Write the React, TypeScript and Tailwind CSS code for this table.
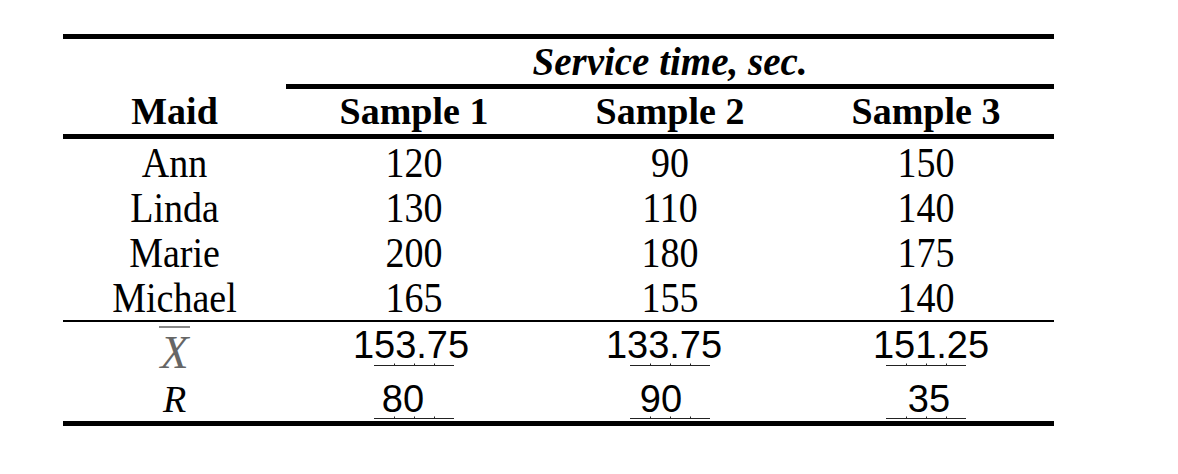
const serif = "font-['Liberation_Serif','Times_New_Roman',serif]";
const sans = "font-['Liberation_Sans',Arial,sans-serif]";

const maids = [
  { name: "Ann", s: [120, 90, 150] },
  { name: "Linda", s: [130, 110, 140] },
  { name: "Marie", s: [200, 180, 175] },
  { name: "Michael", s: [165, 155, 140] },
];

// blank line under the summary numbers, with little ticks like in the doc
function Blank({ bottom }: { bottom: string }) {
  return (
    <svg
      width="80"
      height="4"
      viewBox="0 0 80 4"
      className={`absolute left-1/2 -translate-x-1/2 ${bottom}`}
    >
      <line x1="0" y1="3.5" x2="80" y2="3.5" stroke="#222" strokeWidth="1" />
      <line x1="20.5" y1="1.5" x2="20.5" y2="4" stroke="#222" strokeWidth="1" />
      <line x1="40.5" y1="1.5" x2="40.5" y2="4" stroke="#222" strokeWidth="1" />
      <line x1="60.5" y1="1.5" x2="60.5" y2="4" stroke="#222" strokeWidth="1" />
    </svg>
  );
}

const means = [
  { v: "153.75", shift: "pr-[6px]" },
  { v: "133.75", shift: "pr-[12px]" },
  { v: "151.25", shift: "pl-[10px]" },
];
const ranges = [
  { v: "80", shift: "pr-[22px]" },
  { v: "90", shift: "pr-[18px]" },
  { v: "35", shift: "pl-[6px]" },
];

export default function App() {
  return (
    <div className="w-[1178px] h-[474px] bg-white pl-[63px] pt-[34px] text-black">
      <div className="w-[991px]">
        <div className="h-[5px] bg-black" />

        {/* spanner */}
        <div className="grid grid-cols-[223px_768px]">
          <div />
          <div>
            <div
              className={`${serif} h-[45px] flex items-end justify-center pb-[3px] text-[39px] leading-none font-bold italic`}
            >
              Service time, sec.
            </div>
            <div className="h-[5px] bg-black" />
          </div>
        </div>

        {/* header */}
        <div
          className={`${serif} grid grid-cols-[223px_256px_256px_256px] h-[45px] items-end pb-[4px] text-[38px] leading-none font-bold`}
        >
          <div className="text-center">Maid</div>
          <div className="text-center">Sample 1</div>
          <div className="text-center">Sample 2</div>
          <div className="text-center">Sample 3</div>
        </div>
        <div className="h-[5px] bg-black" />

        {/* data */}
        <div className={`${serif} pb-px text-[38px] leading-none`}>
          {maids.map((m) => (
            <div
              key={m.name}
              className="grid grid-cols-[223px_256px_256px_256px] h-[45px] items-center pt-[3px]"
            >
              <div className="text-center scale-y-110">{m.name}</div>
              {m.s.map((v, i) => (
                <div key={i} className="text-center scale-y-110">
                  {v}
                </div>
              ))}
            </div>
          ))}
        </div>
        <div className="h-[2px] bg-black" />

        {/* X-bar row */}
        <div className="grid grid-cols-[223px_256px_256px_256px] h-[54px]">
          <div className="flex items-center justify-center pt-[4px]">
            <span
              className={`${serif} italic text-[46px] leading-none text-[#666] border-t-2 border-[#888] pt-[2px] px-[1px]`}
            >
              X
            </span>
          </div>
          {means.map((c) => (
            <div
              key={c.v}
              className={`${sans} relative flex items-center justify-center pb-[8px] text-[38px] leading-none ${c.shift}`}
            >
              {c.v}
              <Blank bottom="bottom-[10px]" />
            </div>
          ))}
        </div>

        {/* R row */}
        <div className="grid grid-cols-[223px_256px_256px_256px] h-[45px]">
          <div
            className={`${serif} flex items-center justify-center italic text-[38px] leading-none`}
          >
            R
          </div>
          {ranges.map((c) => (
            <div
              key={c.v}
              className={`${sans} relative flex items-center justify-center text-[38px] leading-none ${c.shift}`}
            >
              {c.v}
              <Blank bottom="bottom-[2px]" />
            </div>
          ))}
        </div>
        <div className="h-[5px] bg-black" />
      </div>
    </div>
  );
}
